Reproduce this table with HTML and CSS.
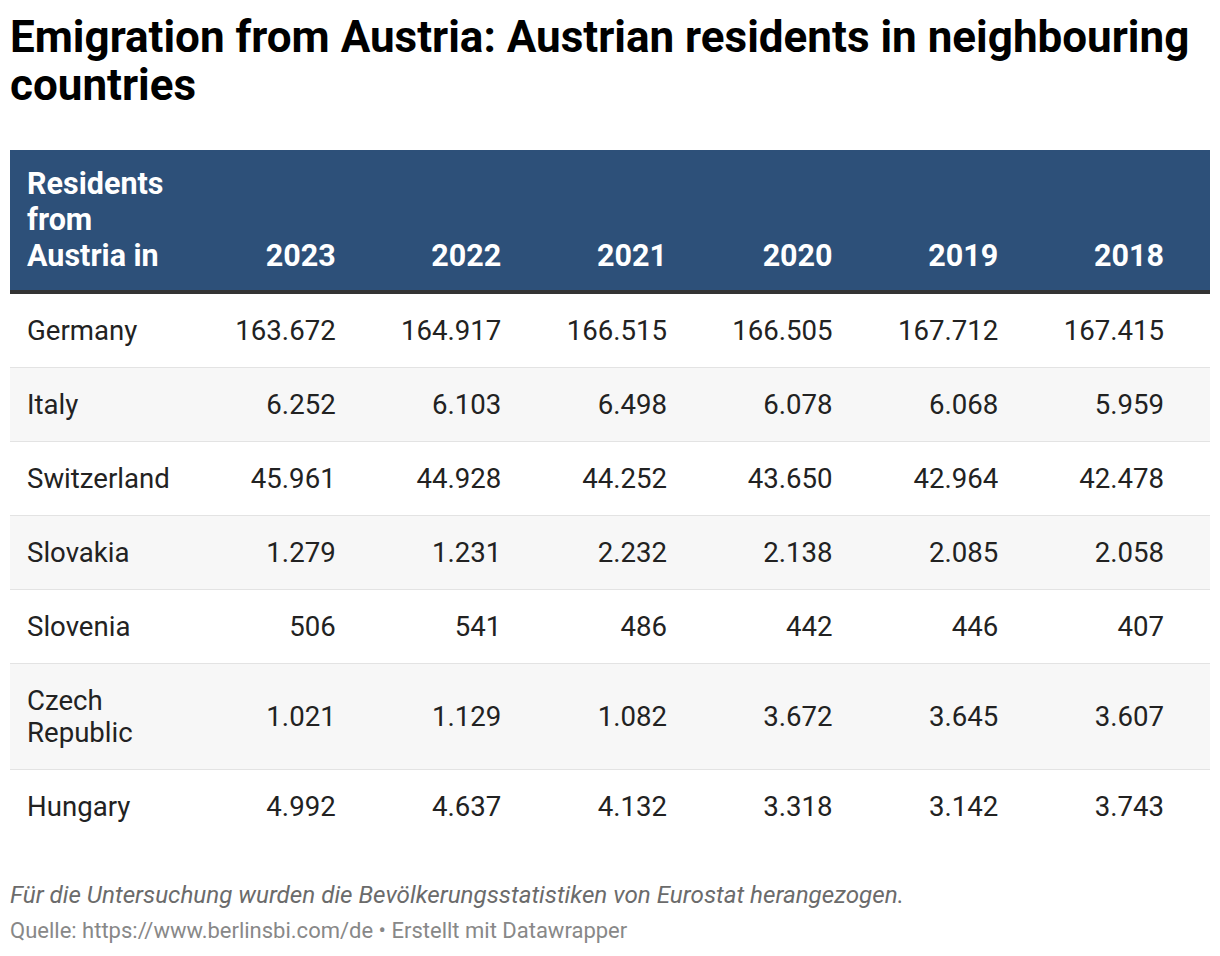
FILE: index.html
```html
<!DOCTYPE html>
<html>
<head>
<meta charset="utf-8">
<link rel="stylesheet" href="styles.css">
</head>
<body>
<div class="chart">
  <h1 class="title">Emigration from Austria: Austrian residents in neighbouring countries</h1>
  <table class="tbl">
    <colgroup>
      <col class="c-first">
      <col class="c-num"><col class="c-num"><col class="c-num"><col class="c-num"><col class="c-num"><col class="c-num">
    </colgroup>
    <thead>
      <tr>
        <th class="lbl">Residents from Austria in</th>
        <th>2023</th><th>2022</th><th>2021</th><th>2020</th><th>2019</th><th>2018</th>
      </tr>
    </thead>
    <tbody>
      <tr><td class="lbl">Germany</td><td>163.672</td><td>164.917</td><td>166.515</td><td>166.505</td><td>167.712</td><td>167.415</td></tr>
      <tr><td class="lbl">Italy</td><td>6.252</td><td>6.103</td><td>6.498</td><td>6.078</td><td>6.068</td><td>5.959</td></tr>
      <tr><td class="lbl">Switzerland</td><td>45.961</td><td>44.928</td><td>44.252</td><td>43.650</td><td>42.964</td><td>42.478</td></tr>
      <tr><td class="lbl">Slovakia</td><td>1.279</td><td>1.231</td><td>2.232</td><td>2.138</td><td>2.085</td><td>2.058</td></tr>
      <tr><td class="lbl">Slovenia</td><td>506</td><td>541</td><td>486</td><td>442</td><td>446</td><td>407</td></tr>
      <tr><td class="lbl">Czech Republic</td><td>1.021</td><td>1.129</td><td>1.082</td><td>3.672</td><td>3.645</td><td>3.607</td></tr>
      <tr><td class="lbl">Hungary</td><td>4.992</td><td>4.637</td><td>4.132</td><td>3.318</td><td>3.142</td><td>3.743</td></tr>
    </tbody>
  </table>
  <p class="note">Für die Untersuchung wurden die Bevölkerungsstatistiken von Eurostat herangezogen.</p>
  <p class="source">Quelle: https://www.berlinsbi.com/de • Erstellt mit Datawrapper</p>
</div>
</body>
</html>
```

FILE: styles.css
```css
html, body {
  margin: 0;
  padding: 0;
  background: #ffffff;
}
body {
  font-family: Roboto, "Liberation Sans", sans-serif;
  color: #222222;
}
.chart {
  padding: 10px 10px 0 10px;
}
.title {
  margin: 0;
  font-size: 44px;
  line-height: 48px;
  font-weight: 700;
  color: #000;
  padding-top: 3px;
}
.tbl {
  margin-top: 41px;
  width: 1200px;
  border-collapse: collapse;
  table-layout: fixed;
}
.c-first { width: 206px; }
.c-num { width: 165.66px; }
.tbl thead tr {
  background: #2d5079;
  border-bottom: 4px solid #333333;
}
.tbl th {
  color: #ffffff;
  font-weight: 700;
  font-size: 30.5px;
  line-height: 36px;
  text-align: right;
  vertical-align: bottom;
  padding: 16px 46px 16px 0;
}
.tbl th.lbl {
  text-align: left;
  padding-left: 17px;
  padding-right: 26px;
}
.tbl td {
  font-size: 27.6px;
  line-height: 32px;
  text-align: right;
  vertical-align: middle;
  padding: 21px 46px 20px 0;
  border-bottom: 1px solid #e3e3e3;
}
.tbl td.lbl {
  text-align: left;
  padding-left: 17px;
  padding-right: 26px;
}
.tbl tbody tr:nth-child(even) {
  background: #f7f7f7;
}
.tbl tbody tr:last-child td {
  border-bottom: none;
}
.note {
  margin: 37px 0 0 0;
  font-size: 24.2px;
  line-height: 30px;
  font-style: italic;
  color: #6b6b6b;
}
.source {
  margin: 7px 0 0 0;
  font-size: 22px;
  line-height: 28px;
  color: #888888;
}
```
